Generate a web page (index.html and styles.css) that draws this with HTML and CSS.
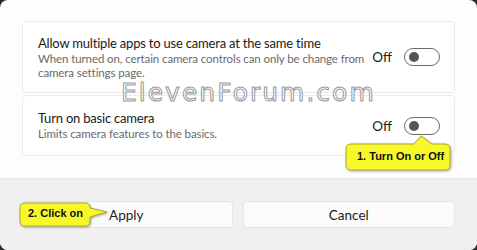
FILE: index.html
```html
<!DOCTYPE html>
<html lang="en">
<head>
    <meta charset="UTF-8">
    <link rel="stylesheet" href="styles.css">
</head>
<body>
<div class="dialog">
    <div class="content">
        <div class="card card-tall">
            <div class="card-text">
                <div class="card-title">Allow multiple apps to use camera at the same time</div>
                <div class="card-desc">When turned on, certain camera controls can only be change from camera settings page.</div>
            </div>
            <div class="state">Off</div>
            <div class="toggle"><span class="knob"></span></div>
        </div>
        <div class="card">
            <div class="card-text">
                <div class="card-title">Turn on basic camera</div>
                <div class="card-desc">Limits camera features to the basics.</div>
            </div>
            <div class="state">Off</div>
            <div class="toggle"><span class="knob"></span></div>
        </div>
    </div>

    <div class="footer">
        <button class="btn">Apply</button>
        <button class="btn">Cancel</button>
    </div>

    <!-- watermark -->
    <div class="watermark">ElevenForum.com</div>

    <!-- callouts -->
    <div class="callout callout-1">
        <svg width="110" height="40" viewBox="0 0 110 40">
            <path d="M7,10 H70 L77,2 L88,10 H101 Q106,10 106,15 V31 Q106,36 101,36 H7 Q2,36 2,31 V15 Q2,10 7,10 Z"/>
        </svg>
        <span class="callout-text">1. Turn On or Off</span>
    </div>
    <div class="callout callout-2">
        <svg width="95" height="30" viewBox="0 0 95 30">
            <path d="M7,3 H67 Q72,3 72,8 L89,12 L72,17 V21 Q72,26 67,26 H7 Q2,26 2,21 V8 Q2,3 7,3 Z"/>
        </svg>
        <span class="callout-text">2. Click on</span>
    </div>
</div>
</body>
</html>
```

FILE: styles.css
```css
body {
    margin: 0;
    background: #2a2a2a;
    font-family: Lato, "Noto Sans", sans-serif;
}

.dialog {
    position: relative;
    width: 477px;
    height: 250px;
    border-radius: 8px;
    overflow: hidden;
    background: #fdfdfd;
    display: flex;
    flex-direction: column;
}

.content {
    flex: 1;
    padding: 21px 22px 0 22px;
    display: flex;
    flex-direction: column;
    gap: 2px;
}

.card {
    height: 61px;
    box-sizing: border-box;
    display: flex;
    align-items: center;
    padding: 0 14px 0 15px;
    background: #fff;
    border: 1px solid #ececec;
    border-radius: 4px;
}

.card-tall {
    height: 72px;
}

.card-text {
    flex: 1;
}

.card-title {
    font-size: 13px;
    letter-spacing: -0.2px;
    line-height: 17px;
    color: #1b1b1b;
}

.card-desc {
    font-size: 11.5px;
    letter-spacing: -0.1px;
    line-height: 14px;
    color: #6a6a6a;
    max-width: 330px;
}

.state {
    font-size: 13.5px;
    color: #222;
    margin-right: 12px;
}

.toggle {
    width: 36px;
    height: 18px;
    box-sizing: border-box;
    border: 1px solid #6b6b6b;
    border-radius: 9px;
    display: flex;
    align-items: center;
    padding-left: 4px;
}

.knob {
    width: 10px;
    height: 10px;
    border-radius: 50%;
    background: #555;
}

.footer {
    height: 72px;
    box-sizing: border-box;
    background: #f0f0f0;
    border-top: 1px solid #e6e6e6;
    padding: 22px 22px 0 20px;
    display: grid;
    grid-template-columns: 1fr 1fr;
    column-gap: 10px;
    align-items: start;
}

.btn {
    height: 27px;
    background: #fbfbfb;
    border: 1px solid #e4e4e4;
    border-radius: 4px;
    font-family: inherit;
    font-size: 13.5px;
    color: #1b1b1b;
}

.watermark {
    position: absolute;
    left: 121px;
    top: 78px;
    font-family: "DejaVu Sans", sans-serif;
    font-size: 25px;
    letter-spacing: 2px;
    color: rgba(255, 255, 255, 0.85);
    -webkit-text-stroke: 1px #9a9a9a;
}

.callout {
    position: absolute;
}

.callout svg {
    display: block;
    filter: drop-shadow(1px 1px 1px rgba(0, 0, 0, 0.3));
}

.callout path {
    fill: #f7f72a;
    stroke: #a8a82a;
    stroke-width: 1;
}

.callout-text {
    position: absolute;
    font-family: "Liberation Sans", Arial, sans-serif;
    font-weight: bold;
    font-size: 11px;
    color: #111;
    white-space: nowrap;
}

.callout-1 {
    left: 344px;
    top: 134px;
}

.callout-1 .callout-text {
    left: 13px;
    top: 16px;
}

.callout-2 {
    left: 18px;
    top: 200px;
}

.callout-2 .callout-text {
    left: 10px;
    top: 7px;
}
```
